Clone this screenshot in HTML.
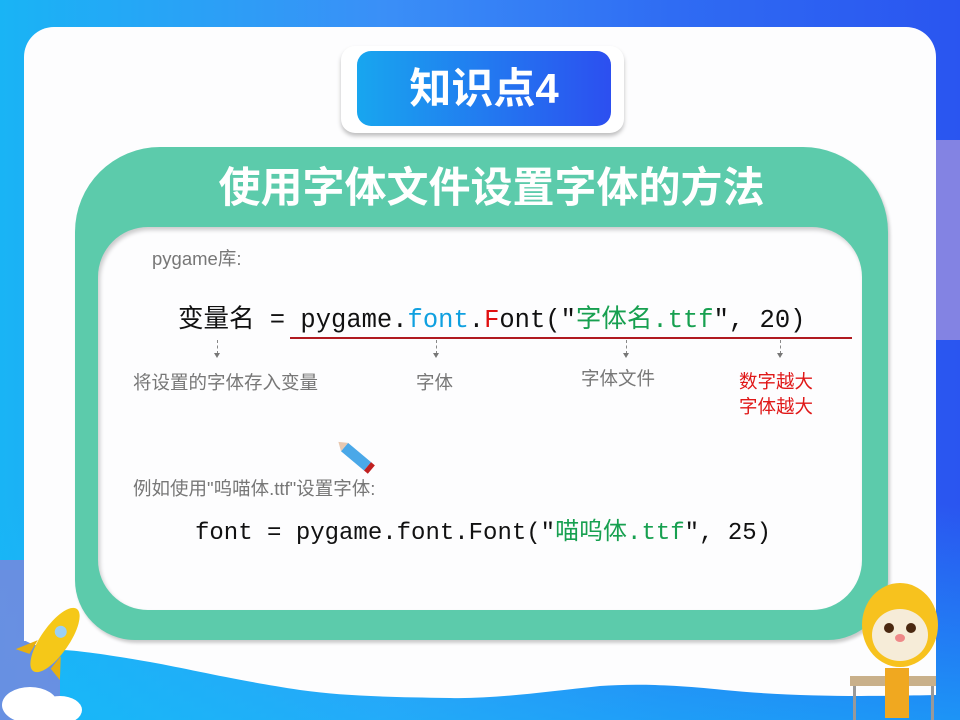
<!DOCTYPE html>
<html><head><meta charset="utf-8"><style>
body{margin:0;width:960px;height:720px;overflow:hidden;position:relative;font-family:"Liberation Sans","Noto Sans CJK SC",sans-serif;background:linear-gradient(90deg,#19b4f5 0%,#3a8ff7 40%,#2f6cf3 70%,#2a55f0 100%);}
.abs{position:absolute}
.mono{font-family:"Liberation Mono","Noto Sans CJK SC",monospace;white-space:pre;color:#111}
.gray{color:#777;font-size:18.5px}
.arr{position:absolute;width:0;border-left:1px dashed #888;height:14px}
.arr:after{content:"";position:absolute;left:-4px;top:13px;border-left:3.5px solid transparent;border-right:3.5px solid transparent;border-top:5px solid #777}
</style></head><body>
<div class="abs" style="left:0;top:0;width:960px;height:720px;background:linear-gradient(180deg,rgba(255,255,255,0) 70%,rgba(20,190,250,.6) 100%)"></div>
<div class="abs" style="left:0;top:560px;width:60px;height:160px;background:#8a7fd8;opacity:.7"></div>
<div class="abs" style="left:936px;top:140px;width:24px;height:200px;background:#9a8ee0;opacity:.8"></div>
<div class="abs" style="left:24px;top:27px;width:912px;height:614px;background:#fdfdfe;border-radius:30px 30px 0 0"></div>
<svg class="abs" style="left:24px;top:640px" width="912" height="62"><path d="M0 0 H912 V55 C860 56 780 58 700 50 C640 44 610 44 576 46 C520 52 470 59 426 58 C360 57 320 56 276 50 C210 40 170 30 126 22 C80 14 50 10 36 10 C20 8 8 5 0 0Z" fill="#fdfdfe"/></svg>
<div class="abs" style="left:341px;top:46px;width:283px;height:87px;background:#fff;border-radius:14px;box-shadow:0 3px 4px rgba(0,0,0,.25)"></div>
<div class="abs" style="left:357px;top:51px;width:254px;height:75px;border-radius:14px;background:linear-gradient(90deg,#18a6ef,#2c4ff0);color:#fff;font-weight:bold;font-size:42px;text-align:center;line-height:75px">知识点4</div>
<div class="abs" style="left:75px;top:147px;width:813px;height:493px;background:#5ccbab;border-radius:85px 85px 60px 60px;box-shadow:2px 3px 3px rgba(0,0,0,.2)"></div>
<div class="abs" style="left:85px;top:159px;width:813px;text-align:center;color:#fff;font-weight:bold;font-size:42px;line-height:58px">使用字体文件设置字体的方法</div>
<div class="abs" style="left:98px;top:227px;width:764px;height:383px;background:#fdfdfe;border-radius:50px;box-shadow:inset 2px 3px 4px rgba(0,0,0,.2)"></div>
<div class="abs gray" style="left:152px;top:245px">pygame库:</div>
<div class="abs mono" style="left:178px;top:298px;font-size:25.5px">变量名 = pygame.<span style="color:#0fa0e0">font</span>.<span style="color:#e01010">F</span>ont("<span style="color:#17a050">字体名.ttf</span>", 20)</div>
<div class="abs" style="left:290px;top:337px;width:562px;height:2px;background:#b01a20"></div>
<div class="arr" style="left:217px;top:340px"></div>
<div class="arr" style="left:436px;top:340px"></div>
<div class="arr" style="left:626px;top:340px"></div>
<div class="arr" style="left:780px;top:340px"></div>
<div class="abs gray" style="left:133px;top:369px">将设置的字体存入变量</div>
<div class="abs gray" style="left:416px;top:369px">字体</div>
<div class="abs gray" style="left:581px;top:365px">字体文件</div>
<div class="abs" style="left:739px;top:369px;color:#e01818;font-size:18.5px;line-height:25px">数字越大<br>字体越大</div>
<svg class="abs" style="left:336px;top:440px" width="44" height="38"><g transform="rotate(40 22 19)"><rect x="4" y="13" width="30" height="11" fill="#4aa8e8"/><rect x="34" y="13" width="5" height="11" fill="#c02020"/><polygon points="4,13 4,24 -4,18.5" fill="#e8c8b0"/></g></svg>
<div class="abs gray" style="left:133px;top:475px">例如使用"呜喵体.ttf"设置字体:</div>
<div class="abs mono" style="left:195px;top:511px;font-size:24px">font = pygame.font.Font("<span style="color:#17a050">喵呜体.ttf</span>", 25)</div>
<svg class="abs" style="left:0;top:600px" width="110" height="120"><ellipse cx="30" cy="105" rx="28" ry="18" fill="#fff"/><ellipse cx="60" cy="110" rx="22" ry="14" fill="#fff"/><g transform="rotate(35 55 40)"><ellipse cx="55" cy="40" rx="14" ry="38" fill="#f5c818"/><circle cx="55" cy="30" r="6" fill="#9ad0f5"/><path d="M41 50 L28 70 L42 66Z M69 50 L82 70 L68 66Z" fill="#e8b010"/></g></svg>
<svg class="abs" style="left:845px;top:570px" width="115" height="150"><ellipse cx="55" cy="55" rx="38" ry="42" fill="#f7c21e"/><ellipse cx="55" cy="65" rx="28" ry="26" fill="#f6ecd8"/><circle cx="44" cy="58" r="5" fill="#4a2810"/><circle cx="66" cy="58" r="5" fill="#4a2810"/><ellipse cx="55" cy="68" rx="5" ry="4" fill="#e88"/><rect x="5" y="106" width="86" height="10" fill="#c9b08a"/><rect x="8" y="116" width="3" height="34" fill="#999"/><rect x="86" y="116" width="3" height="34" fill="#999"/><rect x="40" y="98" width="24" height="50" fill="#f0a820"/></svg>
</body></html>
